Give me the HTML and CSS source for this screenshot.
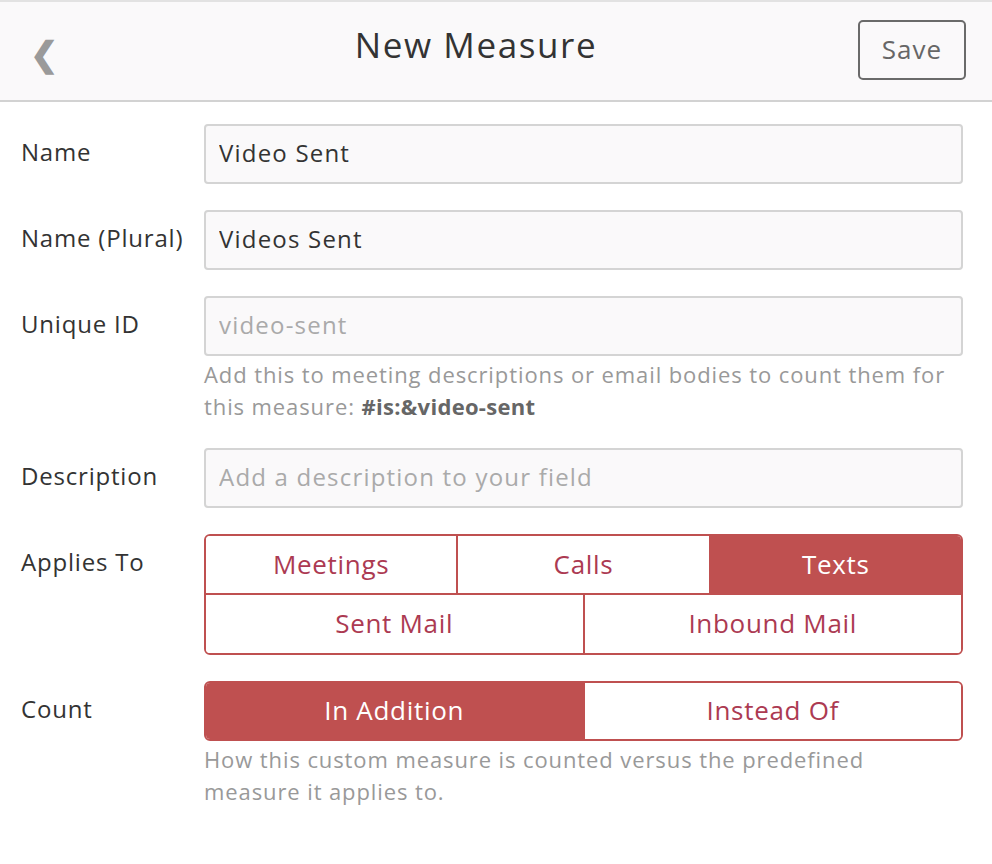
FILE: index.html
```html
<!DOCTYPE html>
<html lang="en">
<head>
    <meta charset="UTF-8">
    <meta name="viewport" content="width=device-width, initial-scale=1.0">
    <title>New Measure</title>
    <link rel="stylesheet" href="styles.css">
</head>
<body>
    <div class="header">
        <span class="back">&#10094;</span>
        <h1>New Measure</h1>
        <button class="save-button">Save</button>
    </div>

    <div class="form">
        <div class="row">
            <label for="name">Name</label>
            <div class="field">
                <input type="text" id="name" value="Video Sent">
            </div>
        </div>

        <div class="row">
            <label for="namePlural">Name (Plural)</label>
            <div class="field">
                <input type="text" id="namePlural" value="Videos Sent">
            </div>
        </div>

        <div class="row">
            <label for="uniqueId">Unique ID</label>
            <div class="field">
                <input type="text" id="uniqueId" placeholder="video-sent">
                <p class="help">Add this to meeting descriptions or email bodies to count them for this measure: <b>#is:&amp;video-sent</b></p>
            </div>
        </div>

        <div class="row">
            <label for="description">Description</label>
            <div class="field">
                <input type="text" id="description" placeholder="Add a description to your field">
            </div>
        </div>

        <div class="row">
            <label>Applies To</label>
            <div class="field">
                <div class="segments">
                    <div class="seg-row">
                        <button class="seg">Meetings</button>
                        <button class="seg">Calls</button>
                        <button class="seg active">Texts</button>
                    </div>
                    <div class="seg-row">
                        <button class="seg">Sent Mail</button>
                        <button class="seg">Inbound Mail</button>
                    </div>
                </div>
            </div>
        </div>

        <div class="row">
            <label>Count</label>
            <div class="field">
                <div class="segments single">
                    <div class="seg-row">
                        <button class="seg active">In Addition</button>
                        <button class="seg">Instead Of</button>
                    </div>
                </div>
                <p class="help">How this custom measure is counted versus the predefined measure it applies to.</p>
            </div>
        </div>
    </div>
</body>
</html>
```

FILE: styles.css
```css
body {
    font-family: "Open Sans", Lato, sans-serif;
    background-color: #fff;
    color: #333;
    margin: 0;
    padding: 0;
}
.header {
    display: flex;
    align-items: center;
    justify-content: space-between;
    height: 98px;
    padding: 0 26px 0 30px;
    background-color: #faf9fa;
    border-top: 2px solid #e2e2e2;
    border-bottom: 2px solid #d2d2d2;
}
.back {
    color: #9a9a9a;
    font-size: 34px;
    font-weight: bold;
    width: 108px;
    margin-top: 4px;
}
h1 {
    margin: -13px 44px 0 0;
    font-size: 35px;
    font-weight: normal;
    letter-spacing: 1.6px;
    color: #333;
}
.save-button {
    width: 108px;
    height: 60px;
    background-color: #faf9fa;
    border: 2px solid #6a6a6a;
    border-radius: 5px;
    color: #666;
    font-family: inherit;
    font-size: 26px;
    letter-spacing: 1px;
    cursor: pointer;
    margin-top: -2px;
    padding-bottom: 3px;
}
.form {
    padding: 22px 29px 0 21px;
}
.row {
    display: grid;
    grid-template-columns: 183px 1fr;
    margin-bottom: 26px;
}
label {
    font-size: 24px;
    letter-spacing: 0.8px;
    line-height: 56px;
    color: #333;
}
input {
    width: 100%;
    height: 60px;
    padding: 0 13px 3px;
    border: 2px solid #d4d4d4;
    border-radius: 4px;
    background-color: #faf9fa;
    box-sizing: border-box;
    font-family: inherit;
    font-size: 24px;
    letter-spacing: 1.2px;
    color: #333;
}
input::placeholder {
    color: #aaa;
}
.help {
    margin: 2px 0 0;
    font-size: 22px;
    letter-spacing: 0.9px;
    line-height: 32px;
    color: #999;
}
.help b {
    color: #666;
    letter-spacing: 0.3px;
}
.segments {
    border: 2px solid #bf5050;
    border-radius: 6px;
    overflow: hidden;
}
.seg-row {
    display: flex;
}
.seg-row + .seg-row {
    border-top: 2px solid #bf5050;
}
.seg {
    flex: 1;
    height: 58px;
    padding-bottom: 3px;
    background-color: #fff;
    border: none;
    border-left: 2px solid #bf5050;
    color: #ac3a52;
    font-family: inherit;
    font-size: 26px;
    letter-spacing: 0.7px;
    cursor: pointer;
}
.seg:first-child {
    border-left: none;
}
.seg-row:first-child .seg {
    height: 57px;
}
.single .seg-row .seg {
    height: 56px;
}
.seg.active {
    background-color: #bf5050;
    color: #fff;
}
```
